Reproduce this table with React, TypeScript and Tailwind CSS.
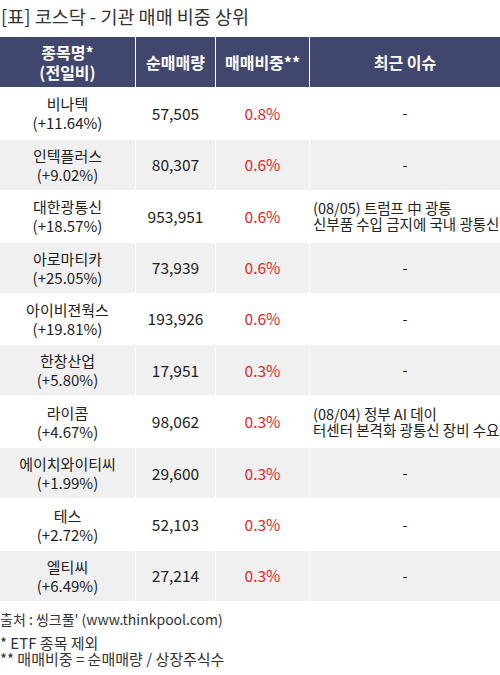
import React from "react";

const rows: { name: string; chg: string; vol: string; pct: string; issue: string[] | null; gray: boolean }[] = [
  { name: "비나텍", chg: "(+11.64%)", vol: "57,505", pct: "0.8%", issue: null, gray: false },
  { name: "인텍플러스", chg: "(+9.02%)", vol: "80,307", pct: "0.6%", issue: null, gray: true },
  { name: "대한광통신", chg: "(+18.57%)", vol: "953,951", pct: "0.6%", issue: ["(08/05) 트럼프 中 광통", "신부품 수입 금지에 국내 광통신주 강세"], gray: false },
  { name: "아로마티카", chg: "(+25.05%)", vol: "73,939", pct: "0.6%", issue: null, gray: true },
  { name: "아이비젼웍스", chg: "(+19.81%)", vol: "193,926", pct: "0.6%", issue: null, gray: false },
  { name: "한창산업", chg: "(+5.80%)", vol: "17,951", pct: "0.3%", issue: null, gray: true },
  { name: "라이콤", chg: "(+4.67%)", vol: "98,062", pct: "0.3%", issue: ["(08/04) 정부 AI 데이", "터센터 본격화 광통신 장비 수요 기대"], gray: false },
  { name: "에이치와이티씨", chg: "(+1.99%)", vol: "29,600", pct: "0.3%", issue: null, gray: true },
  { name: "테스", chg: "(+2.72%)", vol: "52,103", pct: "0.3%", issue: null, gray: false },
  { name: "엘티씨", chg: "(+6.49%)", vol: "27,214", pct: "0.3%", issue: null, gray: true },
];

const font = { fontFamily: '"Noto Sans CJK KR", "Noto Sans", sans-serif' };

export default function App() {
  return (
    <div className="w-[500px] h-[675px] bg-white overflow-hidden text-[#222]" style={font}>
      <div className="h-[37px] pl-[1px] pt-[4px] text-[18.5px] leading-[25px] text-[#333] whitespace-nowrap">[표] 코스닥 - 기관 매매 비중 상위</div>
      <div className="flex flex-col gap-[1.4px] w-[500px]">
        <div className="flex h-[50px] gap-[1px] bg-white">
          <div className="w-[135px] shrink-0 bg-[#40466e] text-white font-bold text-[16px] leading-[20px] flex flex-col items-center justify-center">
            <div>종목명*</div>
            <div>(전일비)</div>
          </div>
          <div className="w-[79px] shrink-0 bg-[#40466e] text-white font-bold text-[16px] flex items-center justify-center">순매매량</div>
          <div className="w-[93px] shrink-0 bg-[#40466e] text-white font-bold text-[16px] flex items-center justify-center whitespace-nowrap">매매비중**</div>
          <div className="flex-1 bg-[#40466e] text-white font-bold text-[16px] flex items-center justify-center">최근 이슈</div>
        </div>
        {rows.map((r) => {
          const bg = r.gray ? "bg-[#f0f0f0]" : "bg-white";
          return (
            <div key={r.name} className="flex h-[50px] gap-[1px] bg-white">
              <div className={`w-[135px] shrink-0 ${bg} text-[15px] leading-[19px] flex flex-col items-center justify-center`}>
                <div>{r.name}</div>
                <div>{r.chg}</div>
              </div>
              <div className={`w-[79px] shrink-0 ${bg} text-[15.5px] flex items-center justify-center`}>{r.vol}</div>
              <div className={`w-[93px] shrink-0 ${bg} text-[15.5px] text-[#e3262b] flex items-center justify-center`}>{r.pct}</div>
              <div className={`flex-1 ${bg} overflow-hidden text-[14.5px] leading-[16px] flex items-center ${r.issue ? "justify-start pl-[3px]" : "justify-center"}`}>
                {r.issue ? (
                  <div className="whitespace-nowrap">
                    <div>{r.issue[0]}</div>
                    <div>{r.issue[1]}</div>
                  </div>
                ) : (
                  <div>-</div>
                )}
              </div>
            </div>
          );
        })}
      </div>
      <div className="pt-[9px] text-[14px] leading-[18px] text-[#333]">출처 : 씽크풀' (www.thinkpool.com)</div>
      <div className="pt-[7px] text-[15px] leading-[16px] text-[#333]">
        <div>* ETF 종목 제외</div>
        <div>** 매매비중 = 순매매량 / 상장주식수</div>
      </div>
    </div>
  );
}
